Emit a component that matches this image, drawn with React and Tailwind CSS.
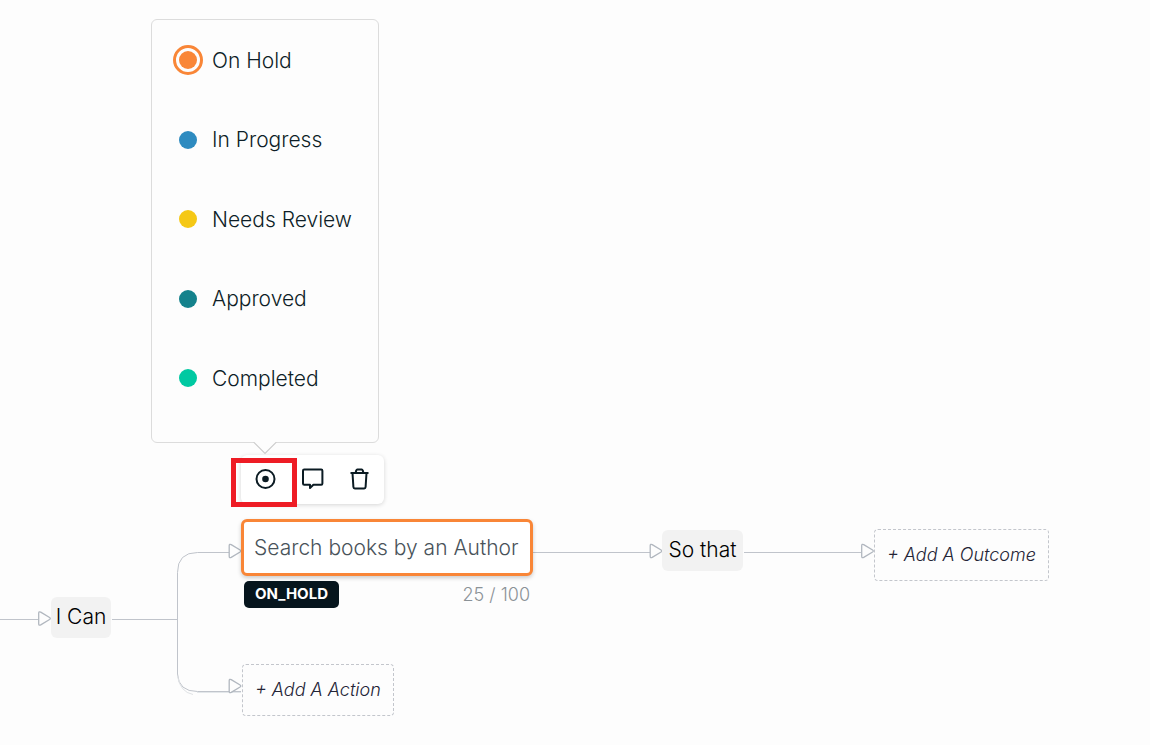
import React, { useState } from "react";

const STATUSES = [
  { id: "ON_HOLD", label: "On Hold", dot: "bg-[#f98637] outline-[#f98637]" },
  { id: "IN_PROGRESS", label: "In Progress", dot: "bg-[#2e8bc0] outline-[#2e8bc0]" },
  { id: "NEEDS_REVIEW", label: "Needs Review", dot: "bg-[#f5c816] outline-[#f5c816]" },
  { id: "APPROVED", label: "Approved", dot: "bg-[#14828c] outline-[#14828c]" },
  { id: "COMPLETED", label: "Completed", dot: "bg-[#00c9a2] outline-[#00c9a2]" },
];

function Arrow({ x, y }) {
  return (
    <path
      transform={`translate(${x} ${y})`}
      d="M0.7 -5.2 Q0.7 -7.4 2.7 -6.4 L11.6 -1 Q13 0 11.6 1 L2.7 6.4 Q0.7 7.4 0.7 5.2 Z"
      fill="#fdfdfd"
      stroke="#b1b7bf"
      strokeWidth="1.3"
      strokeLinejoin="round"
    />
  );
}

function Connectors() {
  return (
    <svg className="absolute left-0 top-0" width="1060" height="740" fill="none" aria-hidden="true">
      <g stroke="#c0c4cb" strokeWidth="1">
        <path d="M0 619.5H38" />
        <path d="M112 619.5H177.5" />
        <path d="M229 552.5H197.5Q177.5 552.5 177.5 572.5V674" />
        <path d="M177.5 674Q178.5 691.5 197.5 691.5H241" />
        <path d="M177.5 676Q180 692 193 694.5" stroke="#dfe2e5" />
        <path d="M197 692.5H241" stroke="#e3e7ea" />
        <path d="M533 552.5H650" />
        <path d="M744 552.5H861" />
      </g>
      <Arrow x={38} y={618.5} />
      <Arrow x={228.5} y={551} />
      <Arrow x={228.5} y={686} />
      <Arrow x={649.5} y={551} />
      <Arrow x={861} y={551} />
    </svg>
  );
}

function StatusMenu({ value, onChange }) {
  return (
    <div
      role="radiogroup"
      aria-label="Status"
      className="absolute left-[151px] top-[19px] flex h-[424px] w-[228px] flex-col justify-between rounded-md border border-[#dcdcdc] bg-[#fdfdfd] pb-[49px] pl-[27px] pt-[25px]"
    >
      {STATUSES.map((s) => (
        <label key={s.id} className="flex h-[30px] items-center gap-[15px] text-[21px] font-light text-[#0e1e27]">
          <input
            type="radio"
            name="status"
            checked={value === s.id}
            onChange={() => onChange(s.id)}
            className={`size-[18px] shrink-0 appearance-none rounded-full outline-offset-3 checked:outline-3 ${s.dot}`}
          />
          <span className="pt-px">{s.label}</span>
        </label>
      ))}
      <svg className="absolute left-[101px] top-full" width="24" height="13" viewBox="0 0 24 13" aria-hidden="true">
        <path d="M0 -1H24V0L12 11.5L0 0Z" fill="#fdfdfd" />
        <path d="M0 -0.5L12 11.5L24 -0.5" fill="none" stroke="#cccccc" strokeWidth="1.2" />
      </svg>
    </div>
  );
}

function Toolbar() {
  return (
    <div className="absolute left-[241px] top-[455px] flex h-[49px] w-[143px] rounded-md bg-white pb-0.5 shadow-[0_1px_4px_rgba(0,0,0,0.16)]">
      <button type="button" aria-label="Status" className="flex flex-1 items-center justify-center">
        <svg width="22" height="22" viewBox="0 0 22 22" fill="none">
          <circle cx="11.5" cy="11" r="9" stroke="#0b1b23" strokeWidth="2" />
          <circle cx="11.5" cy="11" r="3.3" fill="#0b1b23" />
        </svg>
      </button>
      <button type="button" aria-label="Comment" className="flex flex-1 items-center justify-center">
        <svg width="22" height="22" viewBox="0 0 22 22" fill="none" stroke="#0b1b23" strokeWidth="2" strokeLinejoin="round">
          <path d="M2.2 1.6H19.2Q20.4 1.6 20.4 2.8V15.6Q20.4 16.8 19.2 16.8H11.4L8 20V16.8H2.2Q1 16.8 1 15.6V2.8Q1 1.6 2.2 1.6Z" />
        </svg>
      </button>
      <button type="button" aria-label="Delete" className="flex flex-1 items-center justify-center">
        <svg width="22" height="22" viewBox="0 0 22 22" fill="none" stroke="#0b1b23" strokeWidth="2" strokeLinejoin="round">
          <path d="M1.5 5H19.5" />
          <path d="M6.5 5L7.3 2.4Q7.5 1.6 8.3 1.6H12.7Q13.5 1.6 13.7 2.4L14.5 5" />
          <path d="M3.5 5L4.4 19Q4.5 20.4 5.8 20.4H15.2Q16.5 20.4 16.6 19L17.5 5" />
        </svg>
      </button>
      <div className="pointer-events-none absolute -left-[10px] top-[3px] h-[49px] w-[66px] border-5 border-[#ee1c25]" />
    </div>
  );
}

function StepLabel({ children, place }) {
  return (
    <div className={`absolute flex h-[41px] items-center justify-center whitespace-nowrap rounded-md bg-[#f2f2f2] pb-0.5 text-[21px] font-light text-black ${place}`}>
      {children}
    </div>
  );
}

function AddButton({ children, place }) {
  return (
    <button
      type="button"
      className={`absolute flex h-[52px] items-center whitespace-nowrap rounded-sm border border-dashed border-[#c3c6cc] px-3 text-lg font-light italic text-[#242436] ${place}`}
    >
      {children}
    </button>
  );
}

export default function App() {
  const [status, setStatus] = useState("ON_HOLD");
  const [text, setText] = useState("Search books by an Author");

  return (
    <main className="relative min-h-screen overflow-hidden bg-[#fdfdfd] font-['Inter',sans-serif]">
      <Connectors />
      <StepLabel place="left-[51px] top-[597px] min-w-[60px]">I Can</StepLabel>
      <Toolbar />
      <StatusMenu value={status} onChange={setStatus} />

      <section className="absolute left-[241px] top-[519px] w-[292px]">
        <input
          aria-label="Action"
          maxLength={100}
          value={text}
          onChange={(e) => setText(e.target.value)}
          className="block h-[57px] w-full rounded-md border-3 border-[#f98637] bg-white px-2.5 text-[21px] font-light text-[#49535a] shadow-[0_2px_4px_rgba(0,0,0,0.2)] outline-none"
        />
        <div className="flex items-center justify-between px-[3px] pt-1">
          <span className="flex h-[27px] items-center rounded-[5px] bg-[#06151d] px-[11px] text-[15px] font-bold text-white">
            {status}
          </span>
          <span className="pt-px text-lg font-light text-[#8b9297]">{text.length} / 100</span>
        </div>
      </section>

      <AddButton place="left-[242px] top-[664px]">+ Add A Action</AddButton>
      <StepLabel place="left-[662px] top-[530px] min-w-[81px]">So that</StepLabel>
      <AddButton place="left-[874px] top-[529px]">+ Add A Outcome</AddButton>
    </main>
  );
}
